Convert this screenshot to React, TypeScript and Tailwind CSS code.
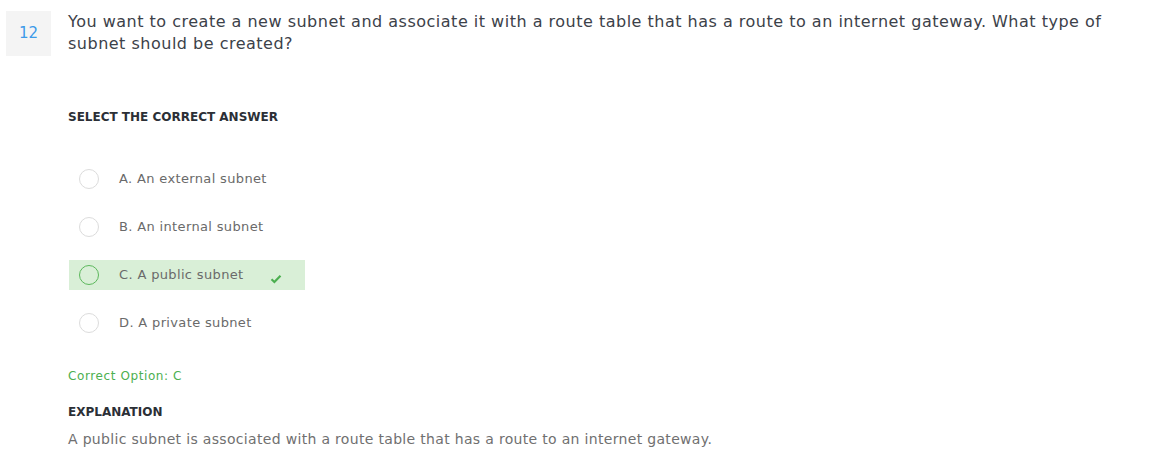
import React from "react";

const options = [
  { key: "A", text: "An external subnet", correct: false },
  { key: "B", text: "An internal subnet", correct: false },
  { key: "C", text: "A public subnet", correct: true },
  { key: "D", text: "A private subnet", correct: false },
];

export default function App() {
  return (
    <div className="w-[1153px] h-[457px] bg-white overflow-hidden" style={{ fontFamily: '"DejaVu Sans", sans-serif' }}>
      <div className="flex pt-[11px] pl-[6px]">
        <div className="w-[45px] h-[45px] bg-[#f4f4f4] flex items-center justify-center text-[15px] text-[#3d9be9] shrink-0">12</div>
        <div className="ml-[17px] flex-1">
          <p className="text-[16px] leading-[22px] tracking-[0.5px] text-[#3c4149] mt-0 w-[1050px]">
            You want to create a new subnet and associate it with a route table that has a route to an internet gateway. What type of subnet should be created?
          </p>
          <div className="mt-[53px] text-[12px] font-bold text-[#2b2f36] leading-[18px]">SELECT THE CORRECT ANSWER</div>
          <div className="mt-[38px] flex flex-col gap-[18px]">
            {options.map((o) => (
              <div
                key={o.key}
                className={
                  "w-[236px] h-[30px] flex items-center pl-[10px] ml-[1px] " +
                  (o.correct ? "bg-[#d9efd7]" : "")
                }
              >
                <span
                  className={
                    "w-[20px] h-[20px] rounded-full border shrink-0 " +
                    (o.correct ? "border-[#5cb85c]" : "border-[#dcdcdc] bg-white")
                  }
                />
                <span className="ml-[20px] text-[13px] tracking-[0.35px] text-[#6a6a6a]">
                  {o.key}. {o.text}
                </span>
                {o.correct && (
                  <svg className="ml-[26px] mt-[8px]" width="12" height="10" viewBox="0 0 12 10">
                    <path d="M1.5 5.2 L4.4 8 L10.5 1.8" fill="none" stroke="#4caf50" strokeWidth="2.2" />
                  </svg>
                )}
              </div>
            ))}
          </div>
          <div className="mt-[29px] text-[12px] tracking-[0.6px] text-[#4caf50] leading-[18px]">Correct Option: C</div>
          <div className="mt-[18px] text-[12px] font-bold text-[#2b2f36] leading-[18px]">EXPLANATION</div>
          <p className="mt-[8px] text-[14px] tracking-[0.32px] text-[#707070] leading-[20px]">
            A public subnet is associated with a route table that has a route to an internet gateway.
          </p>
        </div>
      </div>
    </div>
  );
}
